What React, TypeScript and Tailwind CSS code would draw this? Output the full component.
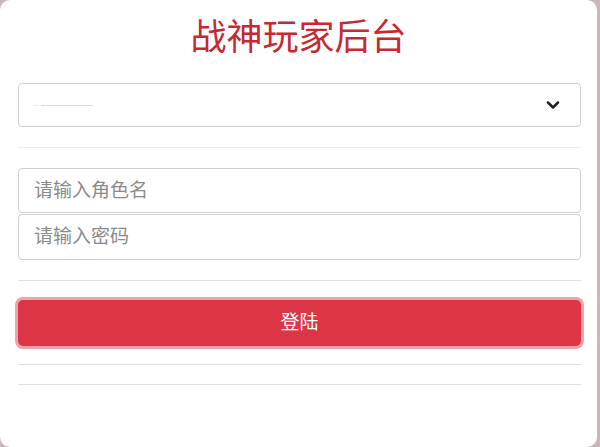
import { ChevronDown } from 'lucide-react'

const font = { fontFamily: '"Liberation Sans", "Noto Sans CJK SC", sans-serif' }

export default function App() {
  return (
    <div className="w-[600px] h-[447px] bg-[#c8b8b8] overflow-hidden" style={font}>
      <div className="w-[597px] h-[447px] bg-white rounded-[10px] px-[18px] pt-[13px] flex flex-col">
        <h1 className="text-center text-[36px] leading-[50px] text-[#c8282f]">战神玩家后台</h1>
        <div className="mt-[20px] h-[44px] w-[563px] border border-[#cfcfcf] rounded-[4px] flex items-center justify-between pl-[14px] pr-[17px]">
          <div className="flex items-center gap-[2px]">
            <div className="w-[6px] h-px bg-[#eeeeee]" />
            <div className="w-[52px] h-px bg-[#dcdcdc]" />
          </div>
          <ChevronDown className="w-[20px] h-[20px] text-[#222]" strokeWidth={3} />
        </div>
        <div className="mt-[20px] w-[563px] h-px bg-[#ececec]" />
        <div className="mt-[20px] w-[563px] flex flex-col gap-px">
          <input
            placeholder="请输入角色名"
            className="h-[45px] border border-[#cfcfcf] rounded-[4px] px-[15px] text-[19px] text-[#555] placeholder:text-[#8a8a8a] outline-none"
          />
          <input
            placeholder="请输入密码"
            className="h-[46px] border border-[#cfcfcf] rounded-[4px] px-[15px] text-[19px] text-[#555] placeholder:text-[#8a8a8a] outline-none"
          />
        </div>
        <div className="mt-[20px] w-[563px] h-px bg-[#e2e2e2]" />
        <button className="mt-[19px] w-[563px] h-[46px] bg-[#dc3545] text-white text-[19px] rounded-[5px] ring-[3px] ring-[#f3a1a8]">
          登陆
        </button>
        <div className="mt-[18px] w-[563px] h-px bg-[#e2e2e2]" />
        <div className="mt-[19px] w-[563px] h-px bg-[#e2e2e2]" />
      </div>
    </div>
  )
}
